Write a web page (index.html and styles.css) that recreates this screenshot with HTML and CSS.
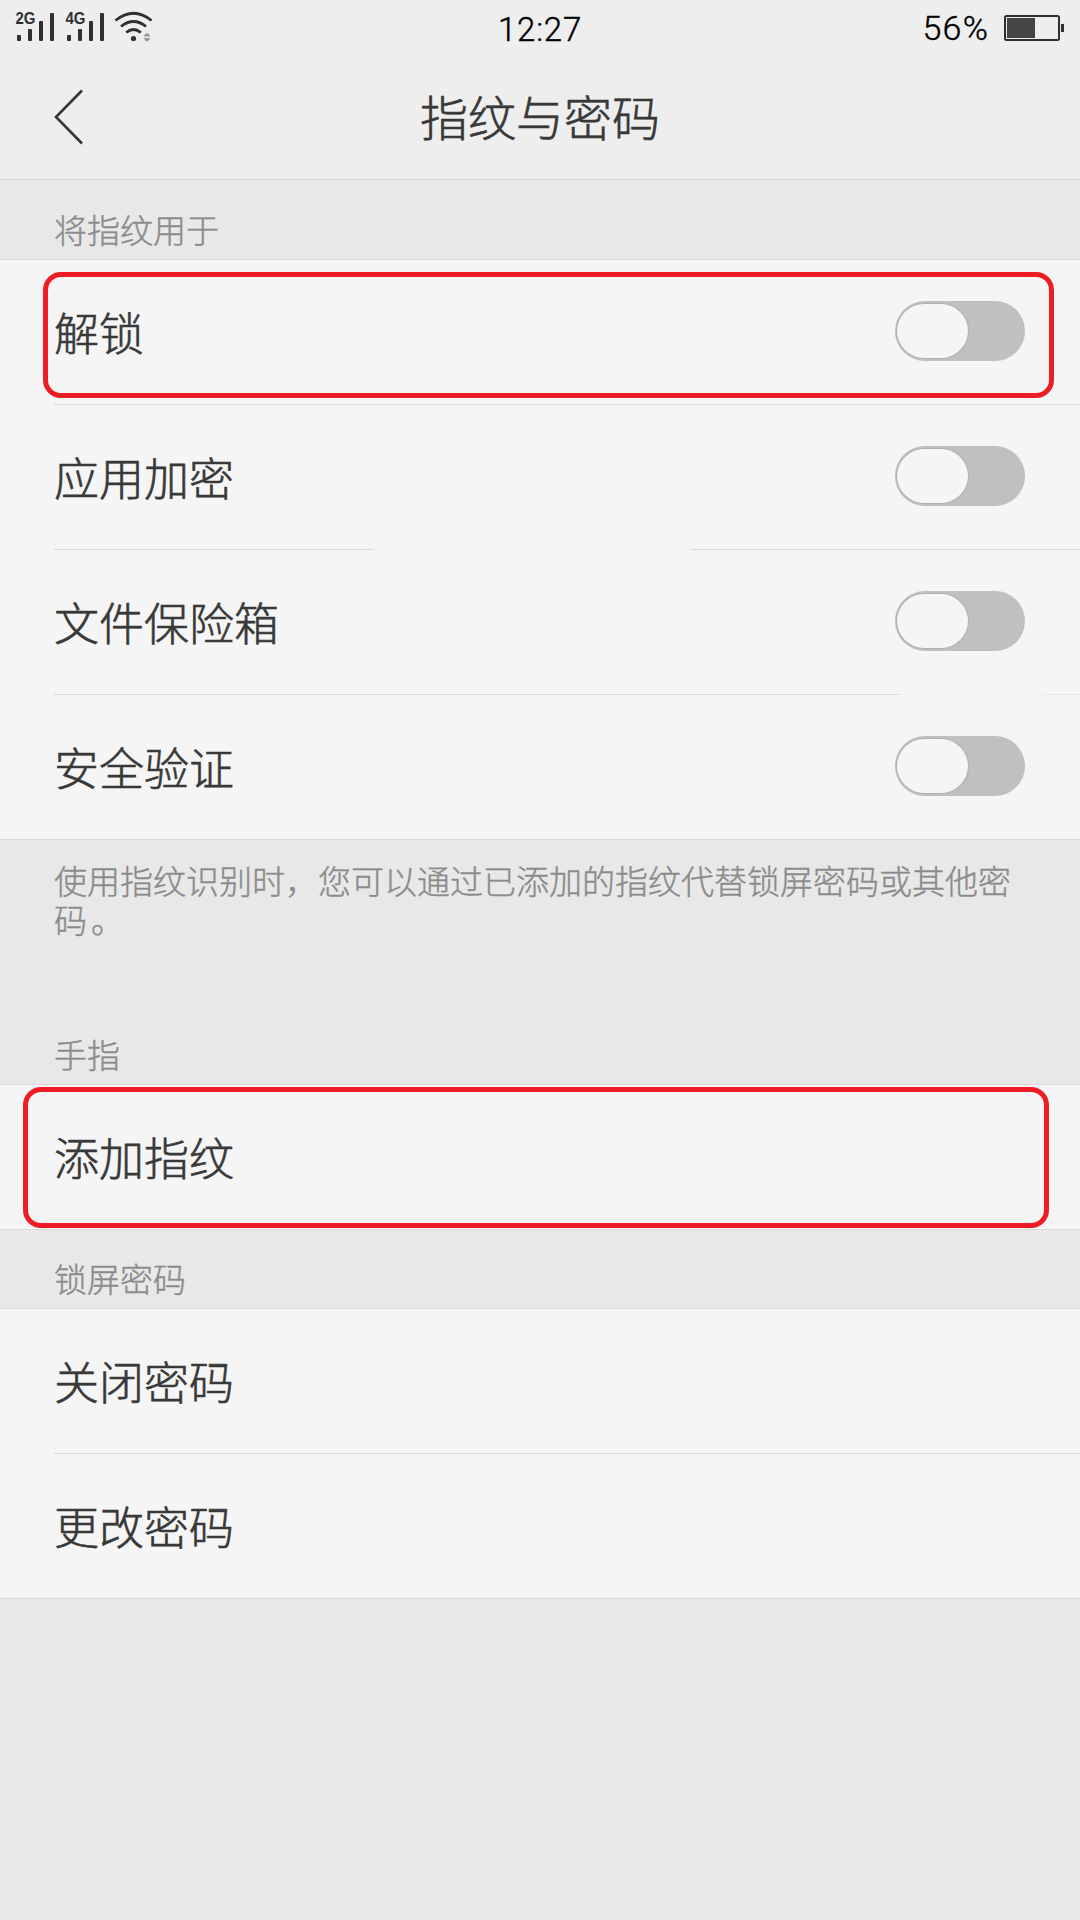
FILE: index.html
```html
<!DOCTYPE html>
<html lang="zh-CN">
<head>
<meta charset="utf-8">
<title>指纹与密码</title>
<link rel="stylesheet" href="styles.css">
</head>
<body>
<div class="status">
  <svg class="signals" width="160" height="56" viewBox="0 0 160 56">
    <g fill="#303030">
      <rect x="17" y="35" width="4" height="6" rx="1"/><rect x="28" y="29" width="4" height="12" rx="1"/><rect x="39" y="21" width="4" height="20" rx="1"/><rect x="50" y="13" width="4" height="28" rx="1"/>
      <rect x="67" y="35" width="4" height="6" rx="1"/><rect x="78" y="29" width="4" height="12" rx="1"/><rect x="89" y="21" width="4" height="20" rx="1"/><rect x="100" y="13" width="4" height="28" rx="1"/>
      <circle cx="133.500" cy="38.500" r="2.600"/>
    </g>
    <text class="net" x="15.500" y="24" textLength="20" lengthAdjust="spacingAndGlyphs">2G</text>
    <text class="net" x="65.500" y="24" textLength="20" lengthAdjust="spacingAndGlyphs">4G</text>
    <path d="M115.500 20.500Q133.500 6 151.500 20.500M121 26.500Q133.500 16.500 146 26.500M126.200 32.500Q133.500 26.500 140.800 32.500" fill="none" stroke="#303030" stroke-width="2.800"/>
    <path d="M143.500 36.500L146 33.300h2l2.500 3.200zM143.500 38L146 41.200h2l2.500-3.200z" fill="#999"/>
  </svg>
  <span class="time">12:27</span>
  <span class="power">
    <span class="percent">56%</span>
    <svg width="60" height="26" viewBox="0 0 60 26"><rect x="1" y="1" width="54" height="24" rx="1.500" fill="none" stroke="#303030" stroke-width="2"/><rect x="3" y="3" width="28" height="20" fill="#444"/><rect x="57" y="9" width="3" height="8" fill="#303030"/></svg>
  </span>
</div>
<header class="header">
  <svg class="back" width="30" height="56" viewBox="0 0 30 56"><path d="M28 1.500L2 28L28 54.500" fill="none" stroke="#383838" stroke-width="2.600"/></svg>
  <h1 class="title">指纹与密码</h1>
</header>
<main>
  <h2 class="label">将指纹用于</h2>
  <ul class="list">
    <li class="row"><span class="name">解锁</span><span class="toggle"></span><i class="mark mark-unlock"></i></li>
    <li class="row row-gap-middle"><span class="name">应用加密</span><span class="toggle"></span></li>
    <li class="row row-gap-end"><span class="name">文件保险箱</span><span class="toggle"></span></li>
    <li class="row"><span class="name">安全验证</span><span class="toggle"></span></li>
  </ul>
  <p class="note"><span>使用指纹识别时，您可以通过已添加的指纹代替锁屏密码或其他密</span><span class="tail">码。</span></p>
  <h2 class="label">手指</h2>
  <ul class="list">
    <li class="row"><span class="name">添加指纹</span><i class="mark mark-add"></i></li>
  </ul>
  <h2 class="label">锁屏密码</h2>
  <ul class="list">
    <li class="row"><span class="name">关闭密码</span></li>
    <li class="row"><span class="name">更改密码</span></li>
  </ul>
</main>
</body>
</html>
```
FILE: styles.css
```css
* { box-sizing: border-box; margin: 0; padding: 0; }

body {
  min-height: 1920px;
  background: #e8e8e8;
  font-family: "Noto Sans CJK SC", sans-serif;
  font-weight: 300;
  color: #383838;
}

.status {
  display: grid;
  grid-template-columns: 1fr auto 1fr;
  align-items: center;
  height: 56px;
  background: #eee;
  color: #000;
  font-family: Roboto, sans-serif;
  -webkit-text-stroke: 0.4px;
}
.signals { display: block; -webkit-text-stroke: 0; }
.net { font: bold 16px "Liberation Sans", sans-serif; fill: #303030; }
.time { padding-top: 2px; font-size: 33px; letter-spacing: 0.8px; }
.power { display: flex; justify-content: flex-end; align-items: center; gap: 15px; padding-right: 16px; }
.percent { font-size: 34px; letter-spacing: 1.2px; }

.header {
  display: grid;
  grid-template-columns: 1fr auto 1fr;
  align-items: center;
  height: 124px;
  background: #eee;
  border-bottom: 1px solid #dadada;
}
.back { margin: 0 0 1px 54px; }
.title { padding-bottom: 5px; font-size: 48px; font-weight: 300; line-height: 60px; -webkit-text-stroke: 0.6px; }

.label {
  height: 80px;
  padding: 25px 54px 0;
  border-bottom: 1px solid #dadada;
  color: #8b8b8b;
  font-size: 33px;
  font-weight: 300;
  line-height: 48px;
  -webkit-text-stroke: 0.4px;
}

.list { list-style: none; background: #f5f5f5; border-bottom: 1px solid #dadada; }
.list + .label { height: 79px; padding-top: 24px; }
.row {
  position: relative;
  display: flex;
  align-items: center;
  justify-content: space-between;
  height: 145px;
  margin-left: 54px;
  padding-right: 55px;
  border-bottom: 1px solid #dadada;
}
.row:last-child { height: 144px; border-bottom: 0; }
.row-gap-middle { border-image: linear-gradient(90deg, #dadada 320px, #f3f3f3 320px 637px, #dadada 637px) 0 0 1; }
.row-gap-end { border-image: linear-gradient(90deg, #dadada 845px, #f0f0f0 845px 990px, #e6e6e6 990px) 0 0 1; }
.name { font-size: 45px; line-height: 60px; -webkit-text-stroke: 0.6px; }

.toggle { width: 130px; height: 60px; margin-bottom: 2px; padding: 3px 2px; border-radius: 30px; background: #c0c0c0; }
.toggle::before {
  content: "";
  display: block;
  width: 71px;
  height: 54px;
  border-radius: 27px;
  background: #f5f5f5;
  box-shadow: 0 0 1px 1px #b0b0b0;
}

.note {
  height: 165px;
  padding: 21px 54px 0;
  color: #8b8b8b;
  font-size: 33px;
  line-height: 39px;
  -webkit-text-stroke: 0.4px;
}
.tail { letter-spacing: 4px; }

/* red callouts drawn over the rows */
.mark { position: absolute; border: 5px solid #ee1c24; border-radius: 18px; }
.mark-unlock { left: -11px; top: 12px; width: 1011px; height: 126px; }
.mark-add { left: -31px; top: 2px; width: 1026px; height: 141px; }
```
